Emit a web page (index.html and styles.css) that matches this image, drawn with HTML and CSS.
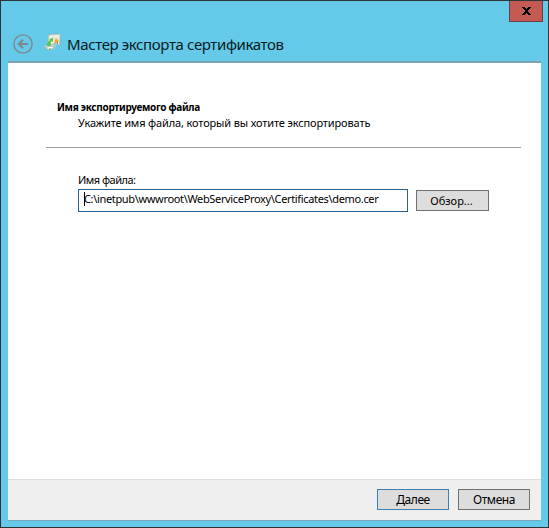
FILE: index.html
```html
<!DOCTYPE html>
<html lang="ru">
<head>
<meta charset="utf-8">
<title>Мастер экспорта сертификатов</title>
<link rel="stylesheet" href="styles.css">
</head>
<body>
<div class="window">
  <div class="controls">
    <button class="close" aria-label="Закрыть">
      <svg width="9" height="8" viewBox="0 0 9 8" shape-rendering="crispEdges"><path d="M0 0h3v1h1v1h1v-1h1v-1h3v1h-1v1h-1v1h-1v2h1v1h1v1h1v1h-3v-1h-1v-1h-1v1h-1v1h-3v-1h1v-1h1v-1h1v-2h-1v-1h-1v-1h-1z"/></svg>
    </button>
  </div>
  <header class="header">
    <svg class="back" width="20" height="20" viewBox="0 0 20 20" fill="none" stroke="#7d898f"><circle cx="10" cy="10" r="9.1" stroke-width="1.4"/><path d="M15 10H6M10 5.8L5.8 10l4.2 4.2" stroke-width="2.2"/></svg>
    <svg class="cert" width="17" height="17" viewBox="0 0 17 17">
      <path d="M5 1l11-.5-.7 10L4 10z" fill="#f4f1e4" stroke="#c8c3a5" stroke-width=".8"/>
      <path d="M7 3.5h7M8 5h6" stroke="#d9d8d0" stroke-width=".7"/>
      <path d="M0 13l5-3 7 2-2 3-5 1z" fill="#d4d9da"/>
      <path d="M1 14l5-2 5 1-5 3z" fill="#f8f8f8" stroke="#8e999b" stroke-width=".6"/>
      <path d="M3 12c0-3 1-5 3-6l-1-1 4-1v4L7.500 7C6 9 7 10 7 12z" fill="#52ca4c"/>
      <circle cx="12.500" cy="7" r="2" fill="#eda531"/><path d="M11 8l-1 2 1.500-.5zm3 0v2l-1.500-.5z" fill="#3862a6"/>
      <path d="M5 15h2" stroke="#3caf3d"/>
    </svg>
    <h1 class="title">Мастер экспорта сертификатов</h1>
  </header>
  <main class="panel">
    <div class="content">
      <section class="intro">
        <h2 class="heading">Имя экспортируемого файла</h2>
        <p class="hint">Укажите имя файла, который вы хотите экспортировать</p>
      </section>
      <section class="form">
        <label class="label" for="file">Имя файла:</label>
        <div class="row">
          <div class="input" id="file"><span class="path">C:\inetpub\wwwroot\WebServiceProxy\Certificates\demo.cer</span><i class="caret"></i></div>
          <button class="button browse">Обзор...</button>
        </div>
      </section>
    </div>
    <footer class="footer">
      <button class="button next">Далее</button>
      <button class="button cancel">Отмена</button>
    </footer>
  </main>
</div>
</body>
</html>
```
FILE: styles.css
```css
* { box-sizing: border-box; }
body { margin: 0; font-family: "Noto Sans", "Open Sans", sans-serif; color: #000; }
h1, h2, p { margin: 0; font-weight: 400; white-space: nowrap; }
.window {
  width: 549px; height: 528px; padding: 0 7px 6px;
  display: flex; flex-direction: column;
  background: #65c9e9; border: 1px solid #303438;
}
.controls { height: 21px; display: flex; justify-content: flex-end; margin-right: -2px; }
.close {
  width: 34px; height: 21px; padding: 0; display: flex; align-items: center; justify-content: center;
  background: #c35b52; border: 1px solid #643f43; border-top: 0;
}
.header { height: 39px; display: flex; align-items: center; padding: 4px 0 0 5px; }
.back { margin-top: 1px; }
.cert { margin: -2px 0 0 11px; }
.title { margin-left: 6px; font-size: 15px; line-height: 20px; letter-spacing: -0.38px; color: #071b22; }
.panel {
  flex: 1; display: flex; flex-direction: column; background: #fff;
  border-top: 2px solid #7ba2b7; border-bottom: 1px solid #79a9ba;
}
.content { flex: 1; padding: 37px 20px 0 38px; }
.intro { height: 48px; border-bottom: 1px solid #a0a0a0; padding-left: 11px; }
.heading { font-size: 10px; line-height: 15px; font-weight: 700; letter-spacing: -0.3px; }
.hint { font-size: 11px; line-height: 16px; padding-left: 21px; letter-spacing: -0.14px; }
.form { padding: 24px 0 0 32px; }
.label { display: block; font-size: 11px; line-height: 16px; padding-bottom: 1px; box-sizing: content-box; letter-spacing: -0.5px; }
.row { display: flex; align-items: center; gap: 8px; }
.input {
  position: relative; width: 330px; height: 23px; border: 1px solid #28618f;
  padding-left: 5px; font-size: 11px; line-height: 18px; letter-spacing: -0.34px; white-space: nowrap;
}
.caret { position: absolute; left: 5px; top: 2px; width: 1px; height: 14px; background: #000; }
.button {
  width: 73px; height: 21px; padding: 0; font: 11px/17px "Noto Sans", "Open Sans", sans-serif;
  color: #000; background: #ddd; border: 1px solid #707070;
}
.browse { padding-right: 2px; }
.footer {
  height: 41px; display: flex; justify-content: flex-end; gap: 9px; padding: 9px 11px 0 0;
  background: #efefef; border-top: 1px solid #dfdfdf;
}
.footer .button { width: 72px; font-size: 12px; letter-spacing: -0.4px; }
.footer .next { border-color: #3c7fb1; }
```
